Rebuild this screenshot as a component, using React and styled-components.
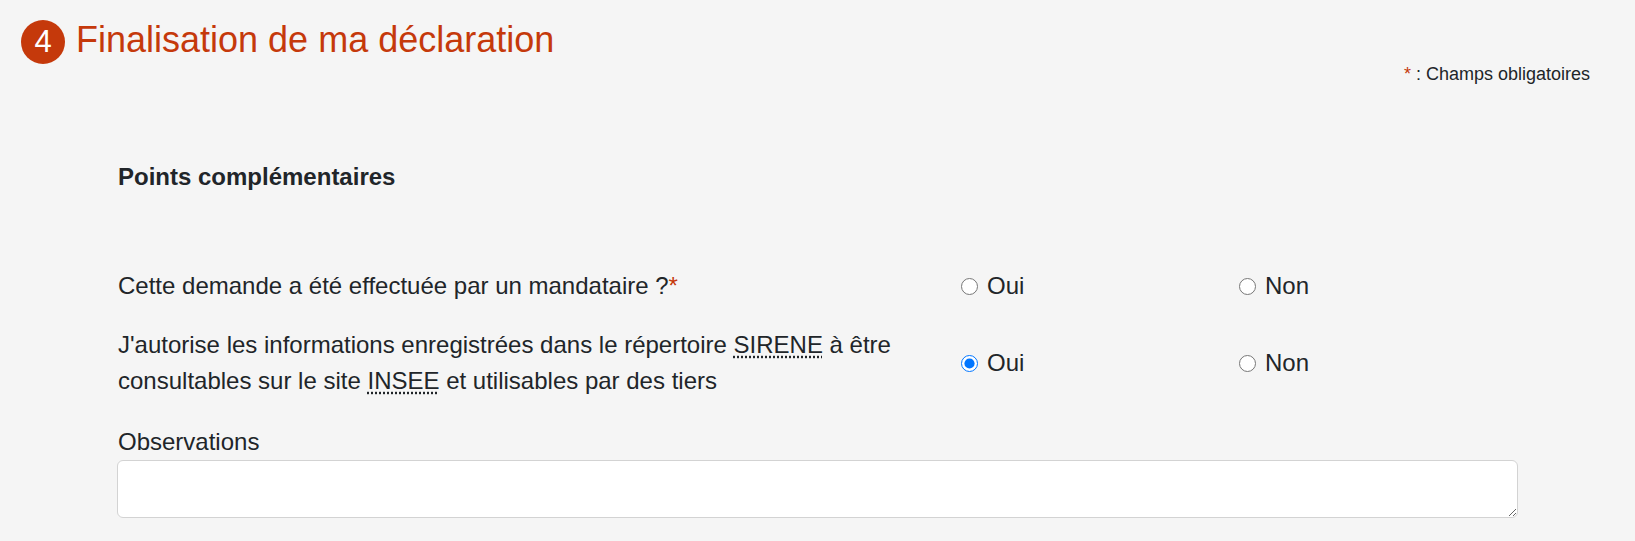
import React from 'react'
import styled, { createGlobalStyle } from 'styled-components'

const GlobalStyle = createGlobalStyle`
  body {
    margin: 0;
    background: #f5f5f5;
    font-family: "Liberation Sans", Arial, sans-serif;
    color: #212529;
  }
`

const Page = styled.div`
  min-height: 541px;
  background: #f5f5f5;
`

const StepHeader = styled.header`
  display: flex;
  align-items: center;
  gap: 11px;
  padding: 18px 0 0 21px;
  height: 43px;
`

const StepBadge = styled.span`
  display: flex;
  align-items: center;
  justify-content: center;
  width: 44px;
  height: 44px;
  border-radius: 50%;
  background: #c5390b;
  color: #fff;
  font-size: 31px;
  line-height: 1;
  margin-top: 4px;
`

const StepTitle = styled.h1`
  margin: 0;
  font-size: 36px;
  font-weight: 400;
  line-height: 43px;
  color: #c5390b;
`

const RequiredNote = styled.p`
  margin: 0;
  padding-right: 45px;
  text-align: right;
  font-size: 18px;
  line-height: 27px;
`

const Star = styled.span`
  color: #c5390b;
`

const Section = styled.section`
  padding: 71px 117px 0;
`

const SectionTitle = styled.h2`
  margin: 0 0 73px 1px;
  font-size: 24px;
  font-weight: 700;
  line-height: 36px;
`

const QuestionRow = styled.div`
  display: grid;
  grid-template-columns: 843px 278px 1fr;
  align-items: center;
  margin-bottom: 23px;
  font-size: 24px;
  line-height: 36px;
`

const QuestionLabel = styled.div`
  padding-left: 1px;
`

const Abbr = styled.abbr`
  text-decoration: underline dotted;
  text-underline-offset: 3px;
  cursor: help;
`

const Option = styled.label`
  display: flex;
  align-items: center;
  gap: 9px;
  padding-left: 1px;
`

const Radio = styled.input`
  width: 17px;
  height: 17px;
  margin: 0;
  accent-color: #0075ff;
`

const FieldLabel = styled.label`
  display: block;
  margin: 25px 0 0 1px;
  font-size: 24px;
  line-height: 36px;
`

const TextArea = styled.textarea`
  display: block;
  box-sizing: border-box;
  width: 100%;
  height: 58px;
  border: 1px solid #d3d3d3;
  border-radius: 6px;
  background: #fff;
  font: inherit;
`

const Question = ({ name, children, checked }) => (
  <QuestionRow>
    <QuestionLabel>{children}</QuestionLabel>
    <Option>
      <Radio type="radio" name={name} defaultChecked={checked === 'oui'} />
      Oui
    </Option>
    <Option>
      <Radio type="radio" name={name} defaultChecked={checked === 'non'} />
      Non
    </Option>
  </QuestionRow>
)

const App = () => {
  return (
    <Page>
      <GlobalStyle />
      <StepHeader>
        <StepBadge>4</StepBadge>
        <StepTitle>Finalisation de ma déclaration</StepTitle>
      </StepHeader>
      <RequiredNote>
        <Star>*</Star> : Champs obligatoires
      </RequiredNote>
      <Section>
        <SectionTitle>Points complémentaires</SectionTitle>
        <Question name="mandataire">
          Cette demande a été effectuée par un mandataire ?<Star>*</Star>
        </Question>
        <Question name="sirene" checked="oui">
          J'autorise les informations enregistrées dans le répertoire{' '}
          <Abbr title="Système d'identification du répertoire des entreprises">SIRENE</Abbr> à être
          consultables sur le site{' '}
          <Abbr title="Institut national de la statistique et des études économiques">INSEE</Abbr> et
          utilisables par des tiers
        </Question>
        <FieldLabel htmlFor="observations">Observations</FieldLabel>
        <TextArea id="observations" />
      </Section>
    </Page>
  )
}

export default App
